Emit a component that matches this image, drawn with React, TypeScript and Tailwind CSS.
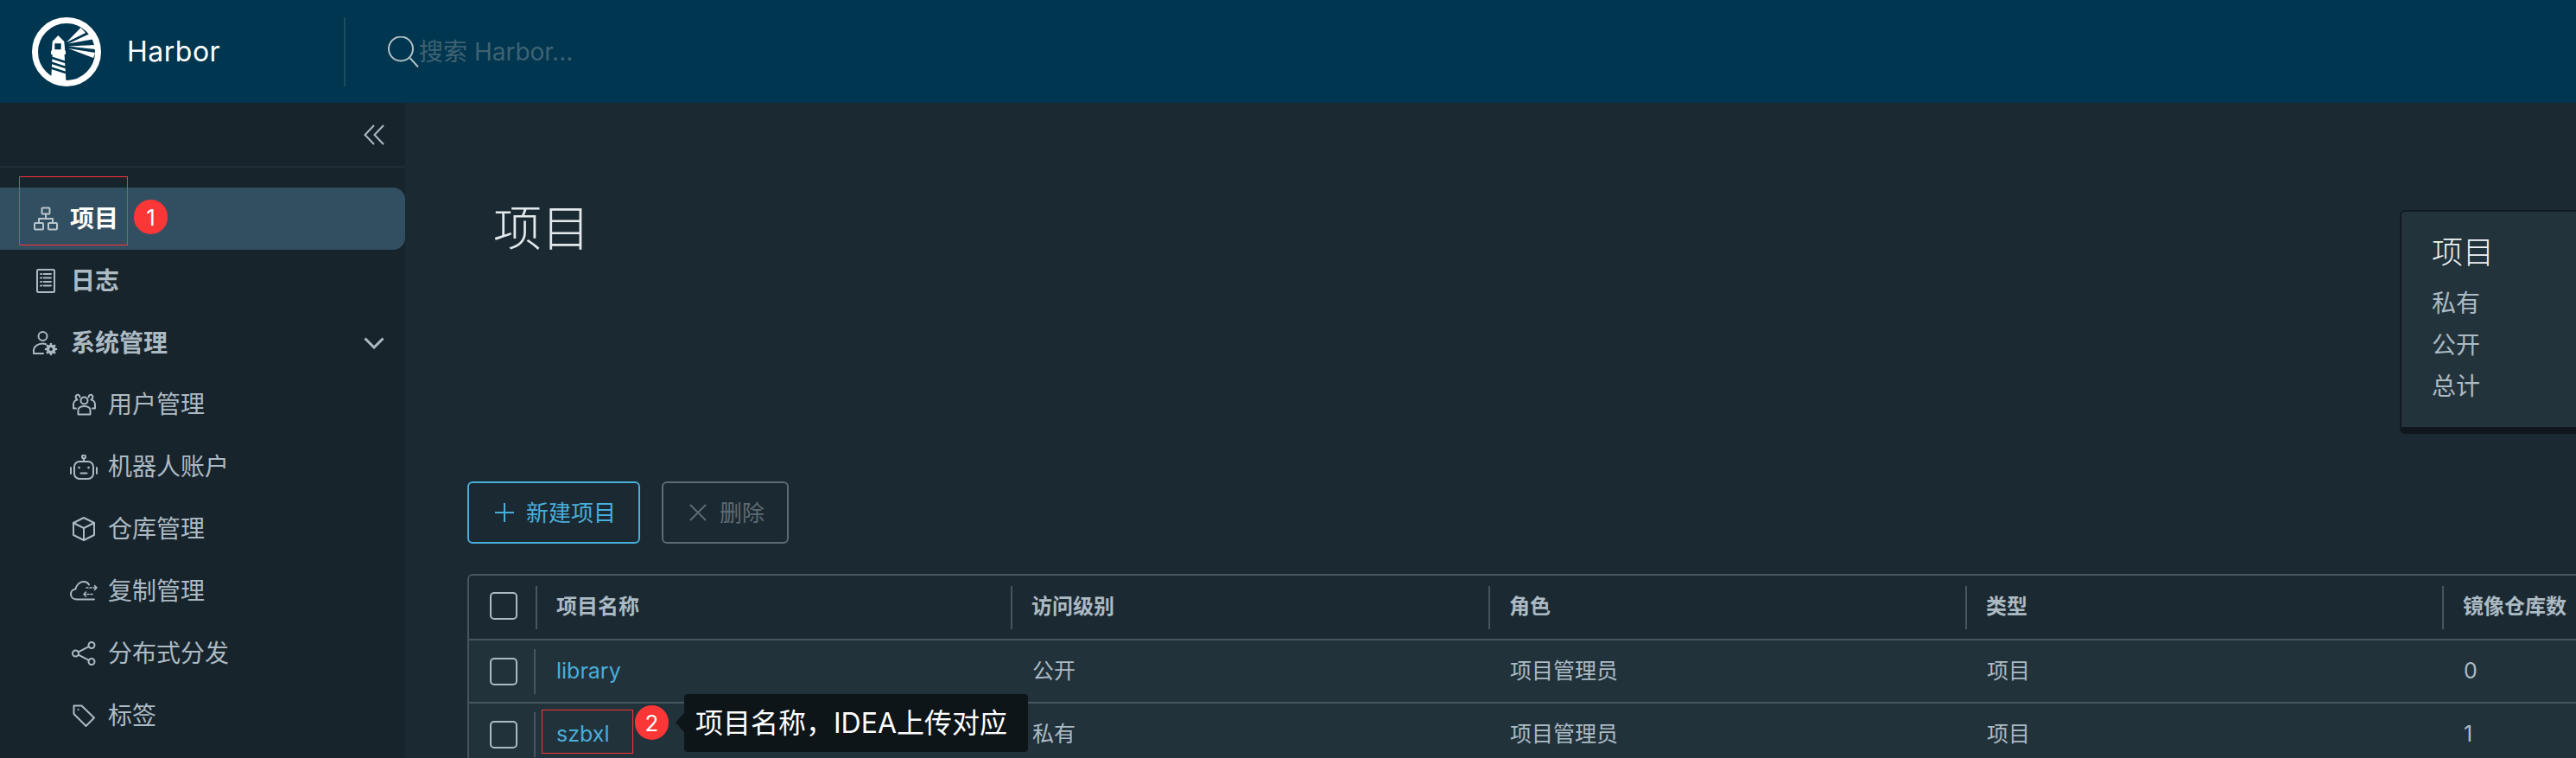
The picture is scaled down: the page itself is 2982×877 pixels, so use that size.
import React from "react";

const S = { fill: "none", stroke: "currentColor", strokeWidth: 2, strokeLinecap: "round", strokeLinejoin: "round" } as const;

function Logo() {
  return (
    <svg viewBox="0 0 80 80" className="w-[80px] h-[80px]">
      <circle cx="40" cy="40" r="36.5" fill="none" stroke="#fff" strokeWidth="7" />
      <path fill="#fff" d="M30.3 21 37.3 28 38.3 38.7 39 38.7 39 43 37.6 43 39.5 75 22 75 23.7 43 22 43 22 38.7 23 38.7 23.7 28Z M26.3 30.3V37.3H33.7V30.3Z" fillRule="evenodd" />
      <path stroke="#00364f" strokeWidth="2.6" fill="none" d="M22 46.5 39 52 M22 52.5 39 58 M22 58.5 39 64" />
      <path fill="#fff" d="M40 29 56.5 12 62 18Z M42 30.5 67 19 70 25.5Z M42 33.5 73 32 73 37Z M42 36 73 41 71 47Z" />
    </svg>
  );
}

const Org = () => (
  <svg viewBox="0 0 28 28" className="w-[28px] h-[28px]" {...S}>
    <rect x="9.5" y="1.5" width="9" height="7" rx="1" />
    <rect x="1" y="19" width="10" height="7.5" rx="1" />
    <rect x="17" y="19" width="10" height="7.5" rx="1" />
    <path d="M14 8.5V14M6 19V14H22V19" />
  </svg>
);
const LogIcon = () => (
  <svg viewBox="0 0 22 28" className="w-[22px] h-[28px]" {...S}>
    <rect x="1" y="1" width="20" height="26" rx="1.5" />
    <path d="M5 6H6M8.5 6H17M5 10.5H6M8.5 10.5H17M5 15H6M8.5 15H17M5 19.5H6M8.5 19.5H17" />
  </svg>
);
const UserGear = () => (
  <svg viewBox="0 0 29 28" className="w-[29px] h-[28px]" {...S}>
    <circle cx="11.5" cy="6" r="5" />
    <path d="M1 26V22.5C1 18 6 14.5 11 14.5C12.5 14.5 14 14.8 15 15.2M1 26H12" />
    <circle cx="21" cy="21" r="3.6" strokeWidth="3.4" />
    <path strokeWidth="2.6" d="M21 15V16.4M21 25.6V27M15 21H16.4M25.6 21H27M16.8 16.8 17.8 17.8M24.2 24.2 25.2 25.2M16.8 25.2 17.8 24.2M24.2 17.8 25.2 16.8" />
  </svg>
);
const Users = () => (
  <svg viewBox="0 0 27 26" className="w-[27px] h-[26px]" {...S}>
    <circle cx="13.5" cy="8.5" r="4" />
    <path d="M6.5 24.5V19.5C6.5 16.5 10 15 13.5 15C17 15 20.5 16.5 20.5 19.5V24.5Z" />
    <path d="M8.5 4.5C8 2 6 1 4.5 2.2 3 3.4 3.4 6 5.5 7.5 3 8 1 10.5 1 13V17.5H4M18.5 4.5C19 2 21 1 22.5 2.2 24 3.4 23.6 6 21.5 7.5 24 8 26 10.5 26 13V17.5H23" />
  </svg>
);
const Robot = () => (
  <svg viewBox="0 0 32 29" className="w-[32px] h-[29px]" {...S}>
    <circle cx="16" cy="2.5" r="2" />
    <path d="M16 4.5V8" />
    <rect x="5" y="8" width="22" height="20" rx="6" />
    <path d="M1 15V22M31 15V22M12.5 21.5H19.5" />
    <path strokeWidth="2.6" d="M10.5 15H10.6M21.5 15H21.6" />
  </svg>
);
const BoxIcon = () => (
  <svg viewBox="0 0 26 28" className="w-[26px] h-[28px]" {...S}>
    <path d="M13 1 25 7V21L13 27 1 21V7Z" />
    <path d="M1 7 13 13 25 7M13 13V27" />
  </svg>
);
const CloudArrows = () => (
  <svg viewBox="0 0 32 24" className="w-[32px] h-[24px]" {...S}>
    <path d="M28 21.5H8C4 21.5 1 19 1 15.5 1 12 3.8 9.8 6.5 9.5 7.5 4.5 11.5 1 15.5 1 18.5 1 21 2.5 22 4.5" />
    <path d="M19 8H21M23 8H25M27 8H31M28.5 5.5 31 8 28.5 10.5M24 15.5H26M20 15.5H22M16 15.5H18M18.5 13 16 15.5 18.5 18" strokeWidth="1.6" />
  </svg>
);
const Share = () => (
  <svg viewBox="0 0 28 28" className="w-[28px] h-[28px]" {...S}>
    <circle cx="4.5" cy="14" r="3.5" />
    <circle cx="23" cy="4.5" r="3.5" />
    <circle cx="23" cy="23.5" r="3.5" />
    <path d="M7.7 12.3 19.8 6.2M7.7 15.7 19.8 21.8" />
  </svg>
);
const Tag = () => (
  <svg viewBox="0 0 26 26" className="w-[26px] h-[26px]" {...S}>
    <path d="M1.5 1.5H10.5L25 15.5 15.5 25 1.5 11Z" />
    <path strokeWidth="2" d="M6.5 6H6.6" />
  </svg>
);

const Badge = ({ n, className }: { n: number; className: string }) => (
  <span className={"absolute w-[39px] h-[40px] rounded-full bg-[#fb3636] text-white text-[26px] flex items-center justify-center " + className}>{n}</span>
);

const subs: [React.ReactNode, string][] = [
  [<Users />, "用户管理"],
  [<Robot />, "机器人账户"],
  [<BoxIcon />, "仓库管理"],
  [<CloudArrows />, "复制管理"],
  [<Share />, "分布式分发"],
  [<Tag />, "标签"],
];

const Check = () => <span className="block w-[32px] h-[32px] rounded-[5px] border-2 border-[#acbac3] shrink-0" />;

const cols = [
  { label: "访问级别", w: "w-[553px]" },
  { label: "角色", w: "w-[552px]" },
  { label: "类型", w: "w-[552px]" },
  { label: "镜像仓库数", w: "w-[400px]" },
];

function Row({ name, vals, extra }: { name: string; vals: string[]; extra?: React.ReactNode }) {
  return (
    <div className="flex h-[73px] shrink-0 bg-[#21323b] border-b-2 border-[#47555f] text-[25px] text-[#acbac3]">
      <div className="w-[75px] pl-[24px] flex items-center shrink-0">
        <Check />
      </div>
      <div className="w-[2px] h-[52px] my-auto bg-[#47555f] shrink-0" />
      <div className="w-[550px] pl-[24px] flex items-center shrink-0 text-[#4aaed9] relative">
        {name}
        {extra}
      </div>
      {vals.map((v, i) => (
        <div key={i} className={cols[i].w + " pl-[25px] flex items-center shrink-0"}>{v}</div>
      ))}
    </div>
  );
}

export default function App() {
  return (
    <div className="w-[2982px] h-[877px] overflow-hidden flex flex-col bg-[#1b2932] font-['Inter','Noto_Sans_CJK_SC',sans-serif]">
      <header className="h-[119px] shrink-0 bg-[#00364f] flex items-center">
        <div className="ml-[37px]"><Logo /></div>
        <span className="ml-[30px] text-[32px] tracking-[0.5px] text-white w-[251px]">Harbor</span>
        <div className="w-[2px] h-[80px] bg-[#1c4c62]" />
        <svg viewBox="0 0 36 36" className="ml-[49px] w-[36px] h-[36px] text-[#b3c0c7]" fill="none" stroke="currentColor" strokeWidth="2">
          <circle cx="15" cy="14.5" r="14" />
          <path d="M25.5 25 35 35.5" />
        </svg>
        <span className="text-[28px] text-[#3f6273] whitespace-nowrap">搜索 Harbor...</span>
      </header>
      <div className="flex flex-1 min-h-0">
        <aside className="w-[469px] shrink-0 bg-[#18242c] text-[#acbac3] text-[28px]">
          <div className="h-[75px] border-b-2 border-[#212e37] flex items-center justify-end pr-[24px]">
            <svg viewBox="0 0 24 24" className="w-[24px] h-[24px]" fill="none" stroke="currentColor" strokeWidth="2">
              <path d="M12 1 1.5 12 12 23M23 1 12.5 12 23 23" />
            </svg>
          </div>
          <nav className="mt-[23px] flex flex-col">
            <div className="relative h-[72px] flex items-center pl-[39px] gap-[14px] bg-[#324f62] rounded-r-[14px] text-white font-bold">
              <span className="text-[#b9c6ce]"><Org /></span>
              <span>项目</span>
              <span className="absolute left-[22px] -top-[13px] w-[126px] h-[80px] border border-[#ff3333]" />
              <Badge n={1} className="left-[155px] top-[14px] font-normal" />
            </div>
            <div className="h-[72px] flex items-center pl-[42px] gap-[18px] font-bold">
              <LogIcon />
              <span>日志</span>
            </div>
            <div className="h-[72px] flex items-center pl-[38px] gap-[15px] font-bold">
              <UserGear />
              <span className="flex-1">系统管理</span>
              <svg viewBox="0 0 24 14" className="w-[24px] h-[14px] mr-[24px]" fill="none" stroke="currentColor" strokeWidth="3">
                <path d="M1.5 1.5 12 12 22.5 1.5" />
              </svg>
            </div>
            {subs.map(([icon, label]) => (
              <div key={label} className="h-[72px] flex items-center pl-[81px] gap-[12px] pb-[2px]">
                <span className="w-[32px] flex justify-center">{icon}</span>
                <span>{label}</span>
              </div>
            ))}
          </nav>
        </aside>
        <main className="relative flex-1 min-w-0 pl-[72px] overflow-hidden">
          <h1 className="mt-[115px] ml-[30px] h-[60px] flex items-center text-[56px] leading-none text-[#e3e8eb] font-light">项目</h1>
          <div className="mt-[263px] h-[72px] flex gap-[25px]">
            <button className="w-[200px] border-2 border-[#49aeda] rounded-[6px] flex items-center pl-[29px] gap-[13px] text-[26px] text-[#49aeda]">
              <svg viewBox="0 0 24 24" className="w-[24px] h-[24px]" fill="none" stroke="currentColor" strokeWidth="2"><path d="M12 1V23M1 12H23" /></svg>
              新建项目
            </button>
            <button className="w-[147px] border-2 border-[#5f6b73] rounded-[6px] flex items-center pl-[30px] gap-[15px] text-[26px] text-[#5f6b73]">
              <svg viewBox="0 0 20 20" className="w-[20px] h-[20px]" fill="none" stroke="currentColor" strokeWidth="2"><path d="M1 1 19 19M19 1 1 19" /></svg>
              删除
            </button>
          </div>
          <div className="mt-[35px] w-[2600px] border-t-2 border-l-2 border-[#47555f] rounded-tl-[6px] flex flex-col">
            <div className="flex h-[75px] shrink-0 border-b-2 border-[#47555f] text-[24px] font-bold text-[#acbac3]">
              <div className="w-[77px] pl-[24px] flex items-center shrink-0 pb-[4px]"><Check /></div>
              <div className="w-[2px] h-[50px] mt-[12px] bg-[#47555f] shrink-0" />
              {["项目名称", ...cols.map((c) => c.label)].map((l, i) => (
                <div key={l} className={(i === 0 ? "w-[550px]" : cols[i - 1].w) + " shrink-0 relative h-full flex items-center pl-[22px] pb-[2px]"}>
                  {l}
                  <span className={i === 4 ? "hidden" : "absolute right-0 top-[12px] w-[2px] h-[50px] bg-[#47555f]"} />
                </div>
              ))}
            </div>
            <Row name="library" vals={["公开", "项目管理员", "项目", "0"]} />
            <Row
              name="szbxl"
              vals={["私有", "项目管理员", "项目", "1"]}
              extra={
                <>
                  <span className="absolute left-[7px] top-[7px] w-[106px] h-[51px] border border-[#ff3333]" />
                  <Badge n={2} className="left-[115px] top-[2px] text-white" />
                  <span className="absolute left-[172px] -top-[11px] w-[398px] h-[67px] rounded-[4px] bg-[#0e1519] text-white text-[32px] flex items-center pl-[13px] whitespace-nowrap">
                    <span className="absolute -left-[10px] top-[22px] border-y-[11px] border-r-[10px] border-y-transparent border-r-[#0e1519]" />
                    项目名称，IDEA上传对应
                  </span>
                </>
              }
            />
          </div>
          <section className="absolute left-[2309px] top-[124px] w-[400px] h-[259px] bg-[#22333b] border-2 border-[#111a20] border-b-[8px] border-b-[#0f171d] rounded-l-[6px] pl-[35px] pt-[22px]">
            <div className="text-[36px] leading-[50px] text-[#f0f3f5] font-light">项目</div>
            <div className="mt-[10px] flex flex-col text-[28px] leading-[48px] text-[#acbac3]">
              <span>私有</span>
              <span>公开</span>
              <span>总计</span>
            </div>
          </section>
        </main>
      </div>
    </div>
  );
}
